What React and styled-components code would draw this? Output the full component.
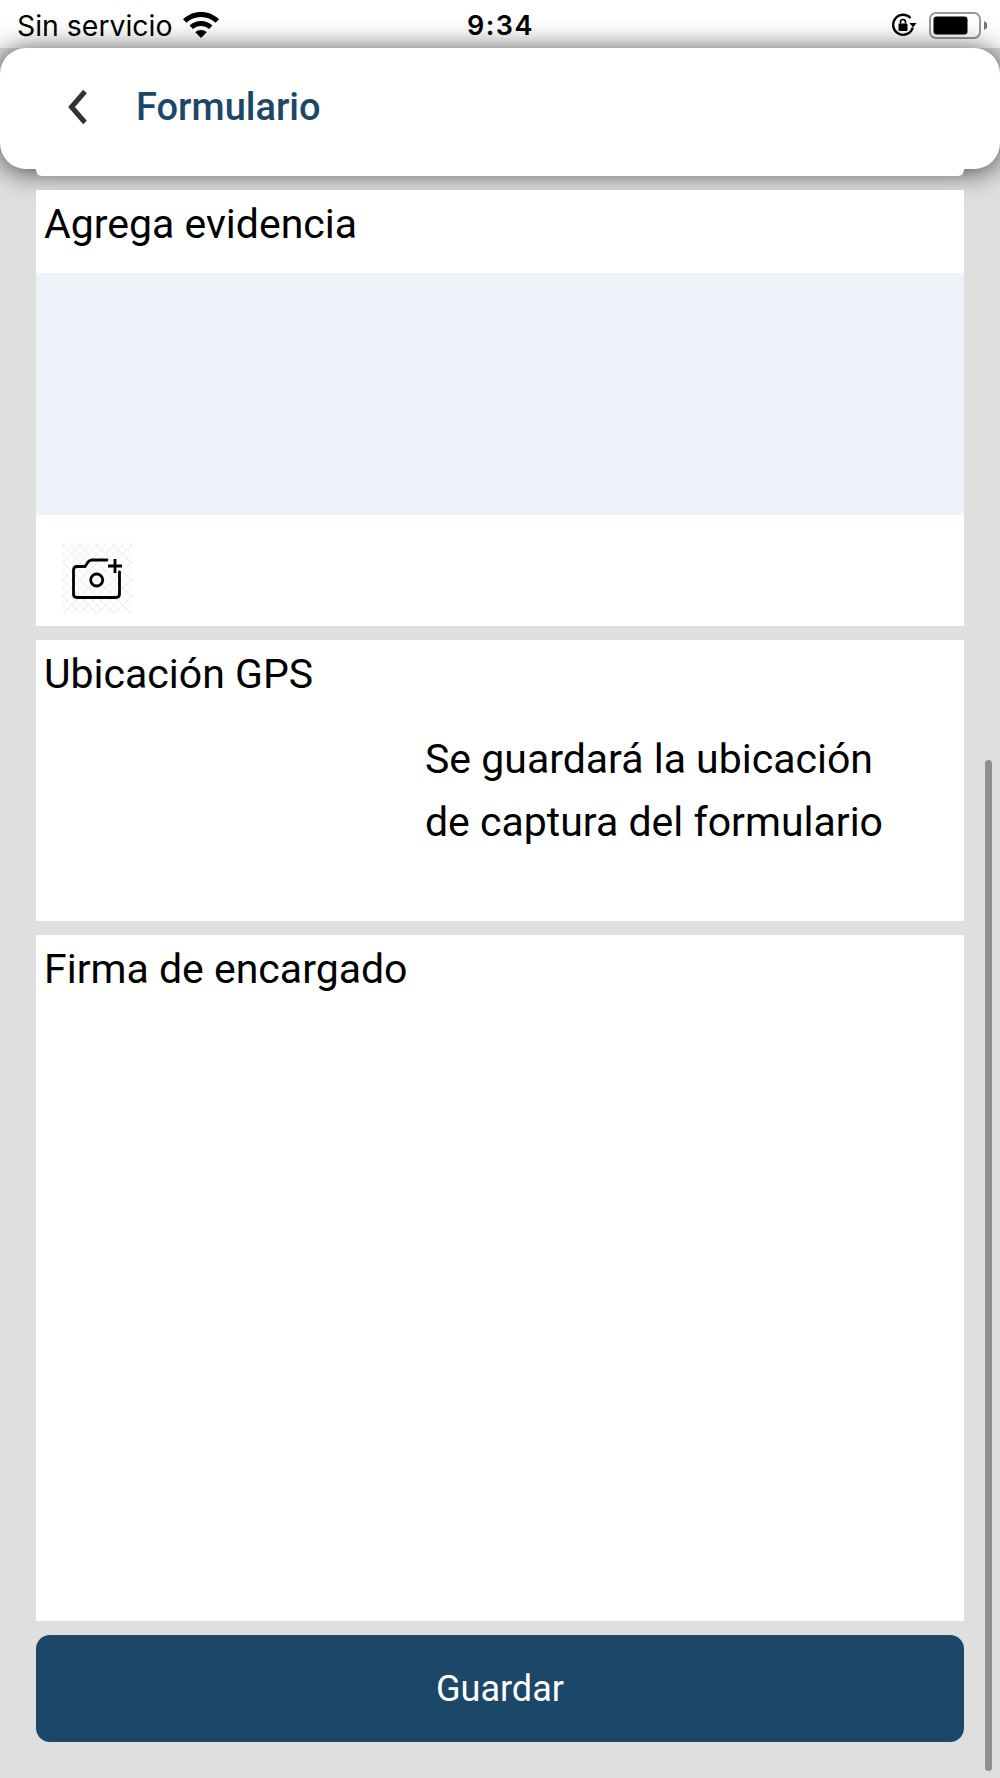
import React from 'react';
import styled, { createGlobalStyle } from 'styled-components';

const Global = createGlobalStyle`
  html, body {
    margin: 0;
    padding: 0;
    background: #dfdfdf;
  }
  * {
    box-sizing: border-box;
  }
`;

const Screen = styled.div`
  position: relative;
  width: 1000px;
  height: 1778px;
  overflow: hidden;
  background: #dfdfdf;
  font-family: Roboto, "Liberation Sans", sans-serif;
  color: #000;
`;

const StatusBar = styled.div`
  display: flex;
  align-items: center;
  justify-content: space-between;
  height: 48px;
  padding: 2px 13px 0 17px;
  background: #fff;
  font-family: Inter, "Liberation Sans", sans-serif;
`;

const StatusSide = styled.div`
  display: flex;
  align-items: center;
  gap: ${props => props.gap || 0}px;
  width: 320px;
  justify-content: ${props => props.end ? 'flex-end' : 'flex-start'};
`;

const Carrier = styled.span`
  font-size: 28.400px;
  font-weight: 400;
`;

const Clock = styled.span`
  margin-left: -3px;
  font-size: 27px;
  font-weight: 600;
  letter-spacing: 1.500px;
`;

const Header = styled.header`
  position: relative;
  z-index: 2;
  display: flex;
  align-items: center;
  gap: 48px;
  height: 121px;
  padding: 0 0 4px 68px;
  background: #fff;
  border-radius: 26px;
  box-shadow: 0 2px 28px rgba(0, 0, 0, 0.75);
`;

const Title = styled.h1`
  margin: 0;
  font-size: 38px;
  font-weight: 500;
  color: #1c4769;
`;

const Body = styled.main`
  position: relative;
  z-index: 3;
  display: flex;
  flex-direction: column;
  gap: 14px;
  margin: 0 36px;
`;

const Stub = styled.div`
  height: 7px;
  background: #fff;
  border-radius: 0 0 6px 6px;
`;

const Card = styled.section`
  height: ${props => props.height}px;
  background: #fff;
`;

const Label = styled.div`
  padding: 13px 8px 0;
  height: 56px;
  font-size: 41px;
  line-height: 42px;
`;

const Evidence = styled.div`
  height: 242px;
  margin-top: 27px;
  background: #eff2fb;
`;

const CameraTile = styled.div`
  display: flex;
  align-items: center;
  justify-content: center;
  width: 70px;
  height: 70px;
  margin: 28px 0 0 26px;
  background-image:
    repeating-linear-gradient(45deg, #f2f2f2 0 1px, transparent 1px 6px),
    repeating-linear-gradient(-45deg, #f2f2f2 0 1px, transparent 1px 6px);
`;

const GpsNote = styled.p`
  margin: 32px 0 0 389px;
  font-size: 41px;
  line-height: 63px;
`;

const SaveButton = styled.button`
  display: block;
  width: 100%;
  height: 107px;
  border: 0;
  border-radius: 14px;
  background: #1c4769;
  color: #fff;
  font-family: Roboto, "Liberation Sans", sans-serif;
  font-size: 36px;
`;

const Scrollbar = styled.div`
  position: absolute;
  top: 760px;
  left: 985px;
  width: 7px;
  height: 1011px;
  border-radius: 4px;
  background: #8f8f8f;
`;

const Wifi = () => (
  <svg width="38" height="28" viewBox="0 0 38 28">
    <path d="M19 1C12 1 6 3.600 1 8.200l3.400 3.600C8.400 8.200 13.400 6 19 6s10.600 2.200 14.600 5.800L37 8.200C32 3.600 26 1 19 1z" fill="#000" />
    <path d="M19 10c-4.400 0-8.400 1.600-11.400 4.400l3.400 3.600c2.100-1.900 5-3 8-3s5.900 1.100 8 3l3.400-3.600C27.400 11.600 23.400 10 19 10z" fill="#000" />
    <path d="M19 19c-2.200 0-4.200.8-5.700 2.200L19 27l5.700-5.800C23.200 19.800 21.200 19 19 19z" fill="#000" />
  </svg>
);

const RotationLock = () => (
  <svg width="26" height="24" viewBox="0 0 26 24">
    <path d="M19.500 5A10 10 0 1 0 21.800 14.500" fill="none" stroke="#000" strokeWidth="2.400" />
    <path d="M18.500 10h7l-3.500 4.500z" fill="#000" />
    <rect x="7.500" y="10.500" width="9" height="7.500" rx="1.200" fill="#000" />
    <path d="M9.500 10.500V9a2.500 2.500 0 0 1 5 0v1.500" fill="none" stroke="#000" strokeWidth="1.600" />
  </svg>
);

const Battery = () => (
  <svg width="58" height="27" viewBox="0 0 58 27">
    <rect x="1" y="1" width="50" height="25" rx="6" fill="none" stroke="#999" strokeWidth="2" />
    <rect x="4.500" y="4.500" width="34" height="18" rx="3" fill="#000" />
    <path d="M55 9l3 2v5l-3 2z" fill="#777" />
  </svg>
);

const BackChevron = () => (
  <svg width="20" height="36" viewBox="0 0 20 36">
    <path d="M17 2.500 3.500 18 17 33.500" fill="none" stroke="#333" strokeWidth="5" />
  </svg>
);

const CameraPlus = () => (
  <svg width="52" height="44" viewBox="0 0 52 44">
    <path d="M36 4H21c-2 0-3 .8-4 2l-3 4.500H6c-2.500 0-3.500 1.500-3.500 3.500v24c0 2.500 1 3.500 3.500 3.500h39c2.500 0 3.500-1 3.500-3.500V16" fill="none" stroke="#000" strokeWidth="2.800" strokeLinecap="round" />
    <circle cx="25.700" cy="24" r="6" fill="none" stroke="#000" strokeWidth="2.800" />
    <path d="M44 3v14M37 10h14" fill="none" stroke="#000" strokeWidth="2.800" />
  </svg>
);

export default function App() {
  return (
    <Screen>
      <Global />
      <StatusBar>
        <StatusSide gap={10}>
          <Carrier>Sin servicio</Carrier>
          <Wifi />
        </StatusSide>
        <Clock>9:34</Clock>
        <StatusSide end gap={12}>
          <RotationLock />
          <Battery />
        </StatusSide>
      </StatusBar>
      <Header>
        <BackChevron />
        <Title>Formulario</Title>
      </Header>
      <Body>
        <Stub />
        <Card height={436}>
          <Label>Agrega evidencia</Label>
          <Evidence />
          <CameraTile>
            <CameraPlus />
          </CameraTile>
        </Card>
        <Card height={281}>
          <Label>Ubicación GPS</Label>
          <GpsNote>
            Se guardará la ubicación
            <br />
            de captura del formulario
          </GpsNote>
        </Card>
        <Card height={686}>
          <Label>Firma de encargado</Label>
        </Card>
        <SaveButton>Guardar</SaveButton>
      </Body>
      <Scrollbar />
    </Screen>
  );
}
